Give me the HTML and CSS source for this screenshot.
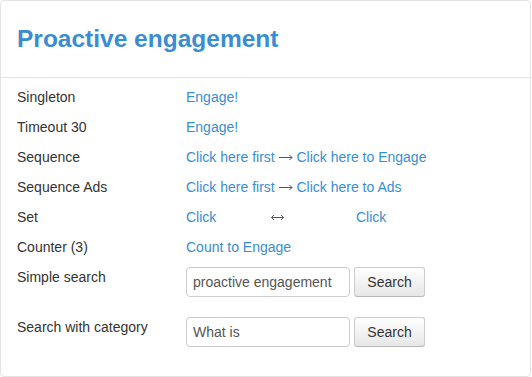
FILE: index.html
```html
<!DOCTYPE html>
<html lang="en">
<head>
  <meta charset="UTF-8">
  <title>Proactive engagement</title>
  <link rel="stylesheet" href="styles.css">
</head>
<body>
  <div class="panel">
    <div class="panel-head">
      <h1>Proactive engagement</h1>
    </div>
    <div class="panel-body">
      <div class="row">
        <div class="label">Singleton</div>
        <div class="value"><a href="#">Engage!</a></div>
      </div>
      <div class="row">
        <div class="label">Timeout 30</div>
        <div class="value"><a href="#">Engage!</a></div>
      </div>
      <div class="row">
        <div class="label">Sequence</div>
        <div class="value"><a href="#">Click here first</a> <svg class="arrow" width="14" height="7" viewBox="0 0 14 7" aria-label="→"><path d="M0 3.5H13M10.5 1L13 3.5L10.5 6"/></svg> <a href="#">Click here to Engage</a></div>
      </div>
      <div class="row">
        <div class="label">Sequence Ads</div>
        <div class="value"><a href="#">Click here first</a> <svg class="arrow" width="14" height="7" viewBox="0 0 14 7" aria-label="→"><path d="M0 3.5H13M10.5 1L13 3.5L10.5 6"/></svg> <a href="#">Click here to Ads</a></div>
      </div>
      <div class="row">
        <div class="label">Set</div>
        <div class="value set">
          <span class="cell"><a href="#">Click</a></span>
          <span class="cell"><svg class="arrow" width="13" height="7" viewBox="0 0 13 7" aria-label="↔"><path d="M0.5 3.5H12.5M3 1L0.5 3.5L3 6M10 1L12.5 3.5L10 6"/></svg></span>
          <span class="cell"><a href="#">Click</a></span>
        </div>
      </div>
      <div class="row">
        <div class="label">Counter (3)</div>
        <div class="value"><a href="#">Count to Engage</a></div>
      </div>
      <div class="row search-row">
        <div class="label">Simple search</div>
        <div class="value search">
          <input type="text" value="proactive engagement">
          <button>Search</button>
        </div>
      </div>
      <div class="row search-row">
        <div class="label">Search with category</div>
        <div class="value search">
          <input type="text" value="What is">
          <button>Search</button>
        </div>
      </div>
    </div>
  </div>
</body>
</html>
```

FILE: styles.css
```css
body {
  margin: 0;
  background: #fff;
  font-family: "Liberation Sans", Arial, sans-serif;
  font-size: 14px;
  color: #333;
}

.panel {
  width: 531px;
  height: 377px;
  box-sizing: border-box;
  border: 1px solid #e3e3e3;
  border-radius: 4px;
}

.panel-head {
  height: 76px;
  border-bottom: 1px solid #e3e3e3;
  padding: 0 16px;
  display: flex;
  align-items: center;
}

.panel-head h1 {
  margin: 0;
  font-size: 24.5px;
  font-weight: bold;
  color: #3a8dd4;
}

.panel-body {
  padding: 9px 16px 0;
}

.row {
  display: flex;
  line-height: 20px;
  margin-bottom: 10px;
}

.label {
  width: 169px;
  flex-shrink: 0;
}

.value a {
  color: #3a8dd4;
  text-decoration: none;
}

.arrow {
  vertical-align: 1px;
  fill: none;
  stroke: #555;
  stroke-width: 1;
}

.set {
  display: flex;
}

.set .cell {
  width: 85px;
}

.search-row {
  margin-bottom: 20px;
}

.search {
  display: flex;
  gap: 4px;
}

.search input {
  width: 164px;
  height: 30px;
  box-sizing: border-box;
  border: 1px solid #ccc;
  border-radius: 4px;
  padding: 0 6px;
  font-family: inherit;
  font-size: 14px;
  color: #555;
}

.search button {
  width: 71px;
  height: 30px;
  border: 1px solid #ccc;
  border-bottom-color: #b8b8b8;
  border-radius: 3px;
  background: linear-gradient(to bottom, #fff, #e6e6e6);
  font-family: inherit;
  font-size: 14px;
  color: #333;
  padding: 0;
}
```
